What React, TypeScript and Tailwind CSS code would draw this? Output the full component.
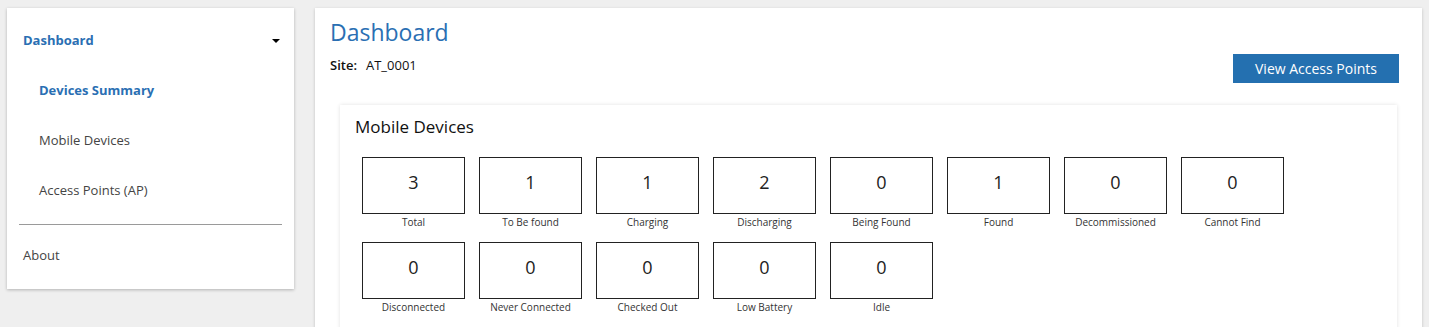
import React from "react";

type Stat = { label: string; value: number };

const stats: Stat[] = [
  { label: "Total", value: 3 },
  { label: "To Be found", value: 1 },
  { label: "Charging", value: 1 },
  { label: "Discharging", value: 2 },
  { label: "Being Found", value: 0 },
  { label: "Found", value: 1 },
  { label: "Decommissioned", value: 0 },
  { label: "Cannot Find", value: 0 },
  { label: "Disconnected", value: 0 },
  { label: "Never Connected", value: 0 },
  { label: "Checked Out", value: 0 },
  { label: "Low Battery", value: 0 },
  { label: "Idle", value: 0 },
];

function Sidebar() {
  return (
    <aside className="w-[287px] h-[281px] shrink-0 bg-white shadow-[0_1px_3px_rgba(0,0,0,0.25)] pt-[7px] px-[16px]">
      <div className="h-[51px] flex items-center justify-between">
        <span className="text-[13px] font-bold text-[#2a6fb3]">Dashboard</span>
        <span className="w-0 h-0 border-x-[4px] border-x-transparent border-t-[4px] border-t-black mr-[-2px]" />
      </div>
      <div className="pl-[16px]">
        <div className="h-[50px] flex items-center text-[13px] font-bold text-[#2a6fb3]">
          Devices Summary
        </div>
        <div className="h-[50px] flex items-center text-[13px] text-[#444]">
          Mobile Devices
        </div>
        <div className="h-[50px] flex items-center text-[13px] text-[#444]">
          Access Points (AP)
        </div>
      </div>
      <hr className="mt-[8px] mx-[-4px] border-t border-[#9a9a9a]" />
      <div className="h-[50px] mt-[6px] flex items-center text-[13px] text-[#444]">
        About
      </div>
    </aside>
  );
}

function StatBox({ stat }: { stat: Stat }) {
  return (
    <div className="flex flex-col items-center">
      <div className="w-[103px] h-[57px] border border-[#222] flex items-center justify-center pb-[6px] text-[18px] text-[#222]">
        {stat.value}
      </div>
      <div className="mt-[1px] text-[10px] leading-[14px] text-[#333] whitespace-nowrap">
        {stat.label}
      </div>
    </div>
  );
}

export default function App() {
  return (
    <div
      className="min-h-[327px] bg-[#efefef] flex gap-[21px] pt-[8px] pl-[7px] pr-[7px] overflow-hidden"
      style={{ fontFamily: "'Open Sans', 'Noto Sans', sans-serif" }}
    >
      <Sidebar />
      <main className="flex-1 bg-white shadow-[0_1px_3px_rgba(0,0,0,0.2)] pl-[15px] pr-[23px] pt-[9px] pb-[20px]">
        <h1 className="text-[23px] leading-[30px] text-[#2a6fb3]">Dashboard</h1>
        <div className="flex items-start justify-between">
          <div className="mt-[9px] text-[13px] text-[#111]">
            <span className="font-semibold">Site:</span>
            <span className="ml-[9px]">AT_0001</span>
          </div>
          <button className="mt-[7px] w-[166px] h-[29px] bg-[#2470b0] text-white text-[14px]">
            View Access Points
          </button>
        </div>
        <section className="mt-[22px] ml-[10px] mr-[2px] bg-white shadow-[0_0_4px_rgba(0,0,0,0.12)] pt-[10px] pl-[15px] pb-[20px]">
          <h2 className="text-[17px] leading-[24px] text-[#111]">Mobile Devices</h2>
          <div className="mt-[18px] ml-[7px] grid grid-cols-[repeat(8,103px)] gap-x-[14px] gap-y-[13px]">
            {stats.map((s) => (
              <StatBox key={s.label} stat={s} />
            ))}
          </div>
        </section>
      </main>
    </div>
  );
}
